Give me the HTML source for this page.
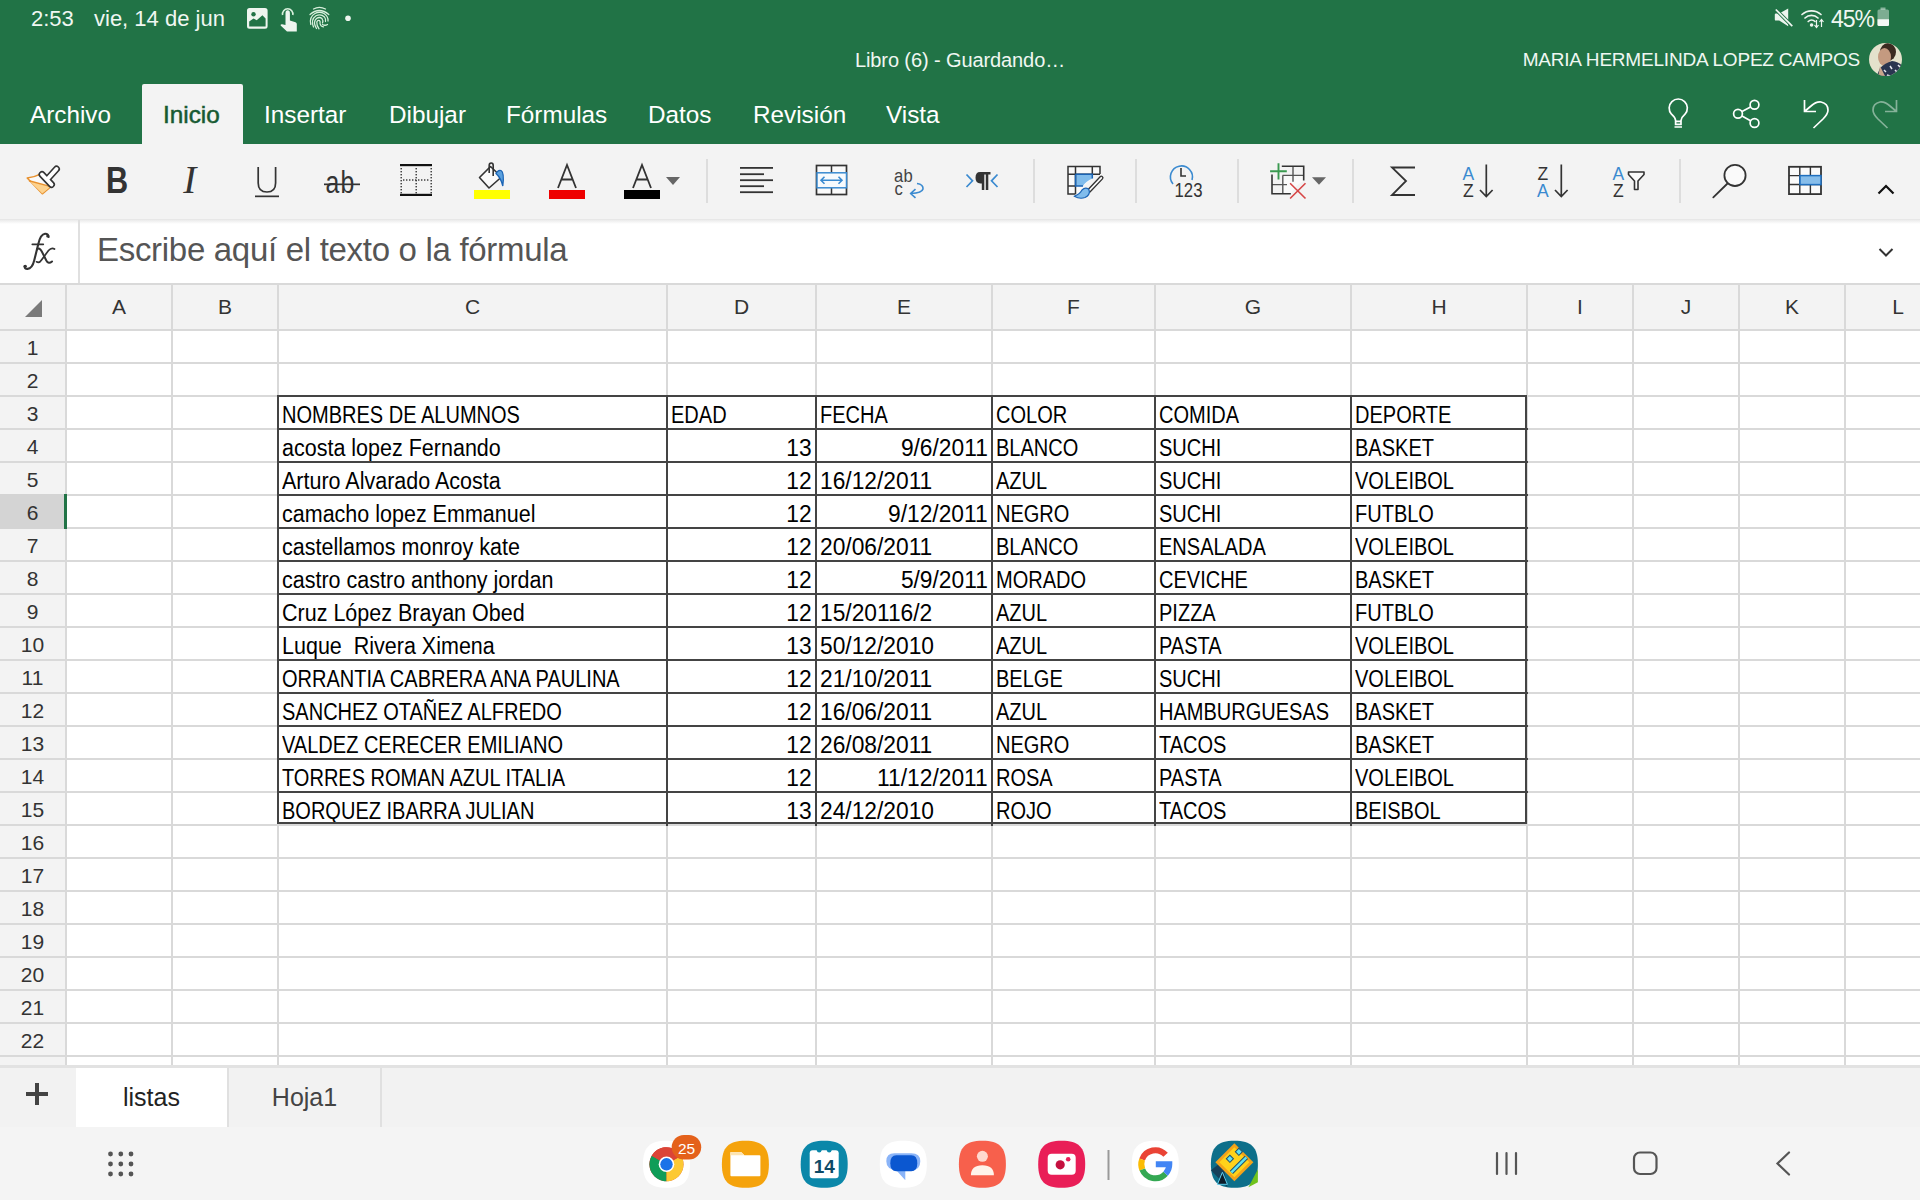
<!DOCTYPE html>
<html><head><meta charset="utf-8">
<style>
*{margin:0;padding:0;box-sizing:border-box}
html,body{width:1920px;height:1200px;overflow:hidden;background:#fff;font-family:"Liberation Sans",sans-serif;position:relative}
.abs{position:absolute}
#green{position:absolute;left:0;top:0;width:1920px;height:144px;background:#217346}
.st{position:absolute;color:#f0f7f2;font-size:24px;line-height:1;white-space:pre}
.tab{position:absolute;top:99px;color:#fff;font-size:24.3px;line-height:32px;white-space:pre}
#inicio{position:absolute;left:142px;top:84px;width:101px;height:60px;background:#f3f3f3;border-radius:2px 2px 0 0}
#toolbar{position:absolute;left:0;top:144px;width:1920px;height:76px;background:#f3f3f3}
#fbar{position:absolute;left:0;top:220px;width:1920px;height:64px;background:#fff}
#fshadow{position:absolute;left:0;top:219px;width:1920px;height:5px;background:linear-gradient(#e6e6e6,rgba(255,255,255,0))}
.sep{position:absolute;top:160px;width:2px;height:40px;background:#dcdcdc}
#hdr{position:absolute;left:0;top:284px;width:1920px;height:46px;background:#f3f3f3}
#rhcol{position:absolute;left:0;top:330px;width:66px;height:736px;background:#f3f3f3}
.ch{position:absolute;top:284px;height:46px;line-height:46px;text-align:center;font-size:21px;color:#333}
.vl{position:absolute;top:284px;width:2px;height:782px;background:#d9d9d9}
.hl{position:absolute;left:0;width:1920px;height:2px;background:#d9d9d9}
.rh{position:absolute;left:0;width:65px;height:33px;line-height:35px;text-align:center;font-size:21px;color:#333}
.rh.sel{background:#d4d4d4}
.cell{position:absolute;height:33px;line-height:39px;padding-left:4px;font-size:23px;color:#000;white-space:pre;overflow:visible}
.cell.r{text-align:right;padding-right:4px;padding-left:0}
.cell span{display:inline-block}
.tb{position:absolute;border:2px solid #444}
.th{position:absolute;height:2px;background:#444}
.tv{position:absolute;width:2px;background:#444}
#sheetbar{position:absolute;left:0;top:1065px;width:1920px;height:62px;background:#f2f2f2;border-top:3px solid #e2e2e2}
#navbar{position:absolute;left:0;top:1127px;width:1920px;height:73px;background:#f4f4f4}
svg{position:absolute;overflow:visible}
</style></head><body>
<div id="green"></div>
<!-- status bar -->
<div class="st" style="left:31px;top:8px;font-size:22px">2:53</div>
<div class="st" style="left:94px;top:8px;font-size:22px">vie, 14 de jun</div>
<div class="st" style="left:1831px;top:7.5px;font-size:23px;letter-spacing:-1.1px">45%</div>
<!-- title -->
<div class="st" style="left:0;width:1920px;text-align:center;top:50px;font-size:20px;letter-spacing:-0.1px">Libro (6) - Guardando…</div>
<div class="st" style="left:1400px;width:460px;text-align:right;top:50px;font-size:19px;letter-spacing:-0.2px">MARIA HERMELINDA LOPEZ CAMPOS</div>
<!-- ribbon tabs -->
<div id="inicio"></div>
<div class="tab" style="left:30px">Archivo</div>
<div class="tab" style="left:163px;color:#175a32;-webkit-text-stroke:0.5px #175a32">Inicio</div>
<div class="tab" style="left:264px">Insertar</div>
<div class="tab" style="left:389px">Dibujar</div>
<div class="tab" style="left:506px">Fórmulas</div>
<div class="tab" style="left:648px">Datos</div>
<div class="tab" style="left:753px">Revisión</div>
<div class="tab" style="left:886px">Vista</div>
<!-- toolbar -->
<div id="toolbar"></div>
<div id="fbar"></div>
<div id="fshadow"></div>
<div class="abs" style="left:78px;top:220px;width:2px;height:64px;background:#e0e0e0"></div>
<svg style="left:0;top:0" width="80" height="290"><g fill="none" stroke="#333" stroke-linecap="round">
<path d="M48.6,237 Q48.2,233.6 45,233.8 Q40.5,234.3 38.3,244 L34.2,260.5 Q32.2,268.6 27.5,268.9 Q24.2,269 24.6,266" stroke-width="2.1"/>
<path d="M32.3,244.3 H43.3" stroke-width="1.7"/>
<path d="M37,249.5 Q39.5,247 41.8,251.5 L46.3,260.5 Q48.5,264.5 52,261.5" stroke-width="2"/>
<path d="M54.5,249 Q51.5,247 48.5,250.5 L41.5,260 Q39.3,263.5 36.5,261.8" stroke-width="1.7"/>
</g><circle cx="47.8" cy="236" r="1.6" fill="#333"/><circle cx="25.3" cy="266.3" r="1.6" fill="#333"/></svg>
<div class="abs" style="left:97px;top:230px;font-size:33px;letter-spacing:-0.3px;line-height:40px;color:#555;white-space:pre">Escribe aquí el texto o la fórmula</div>
<!-- grid -->
<div id="hdr"></div>
<div id="rhcol"></div>
<div class="abs" style="left:0;top:283px;width:1920px;height:2px;background:#d9d9d9"></div>
<div class="ch" style="left:66px;width:106px">A</div>
<div class="ch" style="left:172px;width:106px">B</div>
<div class="ch" style="left:278px;width:389px">C</div>
<div class="ch" style="left:667px;width:149px">D</div>
<div class="ch" style="left:816px;width:176px">E</div>
<div class="ch" style="left:992px;width:163px">F</div>
<div class="ch" style="left:1155px;width:196px">G</div>
<div class="ch" style="left:1351px;width:176px">H</div>
<div class="ch" style="left:1527px;width:106px">I</div>
<div class="ch" style="left:1633px;width:106px">J</div>
<div class="ch" style="left:1739px;width:106px">K</div>
<div class="ch" style="left:1845px;width:106px">L</div>
<div class="vl" style="left:171px"></div>
<div class="vl" style="left:277px"></div>
<div class="vl" style="left:666px"></div>
<div class="vl" style="left:815px"></div>
<div class="vl" style="left:991px"></div>
<div class="vl" style="left:1154px"></div>
<div class="vl" style="left:1350px"></div>
<div class="vl" style="left:1526px"></div>
<div class="vl" style="left:1632px"></div>
<div class="vl" style="left:1738px"></div>
<div class="vl" style="left:1844px"></div>
<div class="vl" style="left:1950px"></div>
<div class="rh" style="top:330px">1</div>
<div class="rh" style="top:363px">2</div>
<div class="rh" style="top:396px">3</div>
<div class="rh" style="top:429px">4</div>
<div class="rh" style="top:462px">5</div>
<div class="rh" style="top:528px">7</div>
<div class="rh" style="top:561px">8</div>
<div class="rh" style="top:594px">9</div>
<div class="rh" style="top:627px">10</div>
<div class="rh" style="top:660px">11</div>
<div class="rh" style="top:693px">12</div>
<div class="rh" style="top:726px">13</div>
<div class="rh" style="top:759px">14</div>
<div class="rh" style="top:792px">15</div>
<div class="rh" style="top:825px">16</div>
<div class="rh" style="top:858px">17</div>
<div class="rh" style="top:891px">18</div>
<div class="rh" style="top:924px">19</div>
<div class="rh" style="top:957px">20</div>
<div class="rh" style="top:990px">21</div>
<div class="rh" style="top:1023px">22</div>
<div class="rh" style="top:1056px">23</div>
<div class="hl" style="top:329px"></div>
<div class="hl" style="top:362px"></div>
<div class="hl" style="top:395px"></div>
<div class="hl" style="top:428px"></div>
<div class="hl" style="top:461px"></div>
<div class="hl" style="top:494px"></div>
<div class="hl" style="top:527px"></div>
<div class="hl" style="top:560px"></div>
<div class="hl" style="top:593px"></div>
<div class="hl" style="top:626px"></div>
<div class="hl" style="top:659px"></div>
<div class="hl" style="top:692px"></div>
<div class="hl" style="top:725px"></div>
<div class="hl" style="top:758px"></div>
<div class="hl" style="top:791px"></div>
<div class="hl" style="top:824px"></div>
<div class="hl" style="top:857px"></div>
<div class="hl" style="top:890px"></div>
<div class="hl" style="top:923px"></div>
<div class="hl" style="top:956px"></div>
<div class="hl" style="top:989px"></div>
<div class="hl" style="top:1022px"></div>
<div class="hl" style="top:1055px"></div>
<div class="cell" style="top:396px;left:278px;width:389px"><span style="transform:scaleX(0.87);transform-origin:0 50%">NOMBRES DE ALUMNOS</span></div>
<div class="cell" style="top:396px;left:667px;width:149px"><span style="transform:scaleX(0.87);transform-origin:0 50%">EDAD</span></div>
<div class="cell" style="top:396px;left:816px;width:176px"><span style="transform:scaleX(0.87);transform-origin:0 50%">FECHA</span></div>
<div class="cell" style="top:396px;left:992px;width:163px"><span style="transform:scaleX(0.87);transform-origin:0 50%">COLOR</span></div>
<div class="cell" style="top:396px;left:1155px;width:196px"><span style="transform:scaleX(0.87);transform-origin:0 50%">COMIDA</span></div>
<div class="cell" style="top:396px;left:1351px;width:176px"><span style="transform:scaleX(0.87);transform-origin:0 50%">DEPORTE</span></div>
<div class="cell" style="top:429px;left:278px;width:389px"><span style="transform:scaleX(0.935);transform-origin:0 50%">acosta lopez Fernando</span></div>
<div class="cell r" style="top:429px;left:667px;width:149px"><span style="transform:scaleX(0.99);transform-origin:100% 50%">13</span></div>
<div class="cell r" style="top:429px;left:816px;width:176px"><span style="transform:scaleX(0.99);transform-origin:100% 50%">9/6/2011</span></div>
<div class="cell" style="top:429px;left:992px;width:163px"><span style="transform:scaleX(0.87);transform-origin:0 50%">BLANCO</span></div>
<div class="cell" style="top:429px;left:1155px;width:196px"><span style="transform:scaleX(0.87);transform-origin:0 50%">SUCHI</span></div>
<div class="cell" style="top:429px;left:1351px;width:176px"><span style="transform:scaleX(0.87);transform-origin:0 50%">BASKET</span></div>
<div class="cell" style="top:462px;left:278px;width:389px"><span style="transform:scaleX(0.935);transform-origin:0 50%">Arturo Alvarado Acosta</span></div>
<div class="cell r" style="top:462px;left:667px;width:149px"><span style="transform:scaleX(0.99);transform-origin:100% 50%">12</span></div>
<div class="cell" style="top:462px;left:816px;width:176px"><span style="transform:scaleX(0.99);transform-origin:0 50%">16/12/2011</span></div>
<div class="cell" style="top:462px;left:992px;width:163px"><span style="transform:scaleX(0.87);transform-origin:0 50%">AZUL</span></div>
<div class="cell" style="top:462px;left:1155px;width:196px"><span style="transform:scaleX(0.87);transform-origin:0 50%">SUCHI</span></div>
<div class="cell" style="top:462px;left:1351px;width:176px"><span style="transform:scaleX(0.87);transform-origin:0 50%">VOLEIBOL</span></div>
<div class="cell" style="top:495px;left:278px;width:389px"><span style="transform:scaleX(0.935);transform-origin:0 50%">camacho lopez Emmanuel</span></div>
<div class="cell r" style="top:495px;left:667px;width:149px"><span style="transform:scaleX(0.99);transform-origin:100% 50%">12</span></div>
<div class="cell r" style="top:495px;left:816px;width:176px"><span style="transform:scaleX(0.99);transform-origin:100% 50%">9/12/2011</span></div>
<div class="cell" style="top:495px;left:992px;width:163px"><span style="transform:scaleX(0.87);transform-origin:0 50%">NEGRO</span></div>
<div class="cell" style="top:495px;left:1155px;width:196px"><span style="transform:scaleX(0.87);transform-origin:0 50%">SUCHI</span></div>
<div class="cell" style="top:495px;left:1351px;width:176px"><span style="transform:scaleX(0.87);transform-origin:0 50%">FUTBLO</span></div>
<div class="cell" style="top:528px;left:278px;width:389px"><span style="transform:scaleX(0.935);transform-origin:0 50%">castellamos monroy kate</span></div>
<div class="cell r" style="top:528px;left:667px;width:149px"><span style="transform:scaleX(0.99);transform-origin:100% 50%">12</span></div>
<div class="cell" style="top:528px;left:816px;width:176px"><span style="transform:scaleX(0.99);transform-origin:0 50%">20/06/2011</span></div>
<div class="cell" style="top:528px;left:992px;width:163px"><span style="transform:scaleX(0.87);transform-origin:0 50%">BLANCO</span></div>
<div class="cell" style="top:528px;left:1155px;width:196px"><span style="transform:scaleX(0.87);transform-origin:0 50%">ENSALADA</span></div>
<div class="cell" style="top:528px;left:1351px;width:176px"><span style="transform:scaleX(0.87);transform-origin:0 50%">VOLEIBOL</span></div>
<div class="cell" style="top:561px;left:278px;width:389px"><span style="transform:scaleX(0.935);transform-origin:0 50%">castro castro anthony jordan</span></div>
<div class="cell r" style="top:561px;left:667px;width:149px"><span style="transform:scaleX(0.99);transform-origin:100% 50%">12</span></div>
<div class="cell r" style="top:561px;left:816px;width:176px"><span style="transform:scaleX(0.99);transform-origin:100% 50%">5/9/2011</span></div>
<div class="cell" style="top:561px;left:992px;width:163px"><span style="transform:scaleX(0.87);transform-origin:0 50%">MORADO</span></div>
<div class="cell" style="top:561px;left:1155px;width:196px"><span style="transform:scaleX(0.87);transform-origin:0 50%">CEVICHE</span></div>
<div class="cell" style="top:561px;left:1351px;width:176px"><span style="transform:scaleX(0.87);transform-origin:0 50%">BASKET</span></div>
<div class="cell" style="top:594px;left:278px;width:389px"><span style="transform:scaleX(0.935);transform-origin:0 50%">Cruz López Brayan Obed</span></div>
<div class="cell r" style="top:594px;left:667px;width:149px"><span style="transform:scaleX(0.99);transform-origin:100% 50%">12</span></div>
<div class="cell" style="top:594px;left:816px;width:176px"><span style="transform:scaleX(0.99);transform-origin:0 50%">15/20116/2</span></div>
<div class="cell" style="top:594px;left:992px;width:163px"><span style="transform:scaleX(0.87);transform-origin:0 50%">AZUL</span></div>
<div class="cell" style="top:594px;left:1155px;width:196px"><span style="transform:scaleX(0.87);transform-origin:0 50%">PIZZA</span></div>
<div class="cell" style="top:594px;left:1351px;width:176px"><span style="transform:scaleX(0.87);transform-origin:0 50%">FUTBLO</span></div>
<div class="cell" style="top:627px;left:278px;width:389px"><span style="transform:scaleX(0.935);transform-origin:0 50%">Luque&nbsp; Rivera Ximena</span></div>
<div class="cell r" style="top:627px;left:667px;width:149px"><span style="transform:scaleX(0.99);transform-origin:100% 50%">13</span></div>
<div class="cell" style="top:627px;left:816px;width:176px"><span style="transform:scaleX(0.99);transform-origin:0 50%">50/12/2010</span></div>
<div class="cell" style="top:627px;left:992px;width:163px"><span style="transform:scaleX(0.87);transform-origin:0 50%">AZUL</span></div>
<div class="cell" style="top:627px;left:1155px;width:196px"><span style="transform:scaleX(0.87);transform-origin:0 50%">PASTA</span></div>
<div class="cell" style="top:627px;left:1351px;width:176px"><span style="transform:scaleX(0.87);transform-origin:0 50%">VOLEIBOL</span></div>
<div class="cell" style="top:660px;left:278px;width:389px"><span style="transform:scaleX(0.87);transform-origin:0 50%">ORRANTIA CABRERA ANA PAULINA</span></div>
<div class="cell r" style="top:660px;left:667px;width:149px"><span style="transform:scaleX(0.99);transform-origin:100% 50%">12</span></div>
<div class="cell" style="top:660px;left:816px;width:176px"><span style="transform:scaleX(0.99);transform-origin:0 50%">21/10/2011</span></div>
<div class="cell" style="top:660px;left:992px;width:163px"><span style="transform:scaleX(0.87);transform-origin:0 50%">BELGE</span></div>
<div class="cell" style="top:660px;left:1155px;width:196px"><span style="transform:scaleX(0.87);transform-origin:0 50%">SUCHI</span></div>
<div class="cell" style="top:660px;left:1351px;width:176px"><span style="transform:scaleX(0.87);transform-origin:0 50%">VOLEIBOL</span></div>
<div class="cell" style="top:693px;left:278px;width:389px"><span style="transform:scaleX(0.87);transform-origin:0 50%">SANCHEZ OTAÑEZ ALFREDO</span></div>
<div class="cell r" style="top:693px;left:667px;width:149px"><span style="transform:scaleX(0.99);transform-origin:100% 50%">12</span></div>
<div class="cell" style="top:693px;left:816px;width:176px"><span style="transform:scaleX(0.99);transform-origin:0 50%">16/06/2011</span></div>
<div class="cell" style="top:693px;left:992px;width:163px"><span style="transform:scaleX(0.87);transform-origin:0 50%">AZUL</span></div>
<div class="cell" style="top:693px;left:1155px;width:196px"><span style="transform:scaleX(0.87);transform-origin:0 50%">HAMBURGUESAS</span></div>
<div class="cell" style="top:693px;left:1351px;width:176px"><span style="transform:scaleX(0.87);transform-origin:0 50%">BASKET</span></div>
<div class="cell" style="top:726px;left:278px;width:389px"><span style="transform:scaleX(0.87);transform-origin:0 50%">VALDEZ CERECER EMILIANO</span></div>
<div class="cell r" style="top:726px;left:667px;width:149px"><span style="transform:scaleX(0.99);transform-origin:100% 50%">12</span></div>
<div class="cell" style="top:726px;left:816px;width:176px"><span style="transform:scaleX(0.99);transform-origin:0 50%">26/08/2011</span></div>
<div class="cell" style="top:726px;left:992px;width:163px"><span style="transform:scaleX(0.87);transform-origin:0 50%">NEGRO</span></div>
<div class="cell" style="top:726px;left:1155px;width:196px"><span style="transform:scaleX(0.87);transform-origin:0 50%">TACOS</span></div>
<div class="cell" style="top:726px;left:1351px;width:176px"><span style="transform:scaleX(0.87);transform-origin:0 50%">BASKET</span></div>
<div class="cell" style="top:759px;left:278px;width:389px"><span style="transform:scaleX(0.87);transform-origin:0 50%">TORRES ROMAN AZUL ITALIA</span></div>
<div class="cell r" style="top:759px;left:667px;width:149px"><span style="transform:scaleX(0.99);transform-origin:100% 50%">12</span></div>
<div class="cell r" style="top:759px;left:816px;width:176px"><span style="transform:scaleX(0.99);transform-origin:100% 50%">11/12/2011</span></div>
<div class="cell" style="top:759px;left:992px;width:163px"><span style="transform:scaleX(0.87);transform-origin:0 50%">ROSA</span></div>
<div class="cell" style="top:759px;left:1155px;width:196px"><span style="transform:scaleX(0.87);transform-origin:0 50%">PASTA</span></div>
<div class="cell" style="top:759px;left:1351px;width:176px"><span style="transform:scaleX(0.87);transform-origin:0 50%">VOLEIBOL</span></div>
<div class="cell" style="top:792px;left:278px;width:389px"><span style="transform:scaleX(0.87);transform-origin:0 50%">BORQUEZ IBARRA JULIAN</span></div>
<div class="cell r" style="top:792px;left:667px;width:149px"><span style="transform:scaleX(0.99);transform-origin:100% 50%">13</span></div>
<div class="cell" style="top:792px;left:816px;width:176px"><span style="transform:scaleX(0.99);transform-origin:0 50%">24/12/2010</span></div>
<div class="cell" style="top:792px;left:992px;width:163px"><span style="transform:scaleX(0.87);transform-origin:0 50%">ROJO</span></div>
<div class="cell" style="top:792px;left:1155px;width:196px"><span style="transform:scaleX(0.87);transform-origin:0 50%">TACOS</span></div>
<div class="cell" style="top:792px;left:1351px;width:176px"><span style="transform:scaleX(0.87);transform-origin:0 50%">BEISBOL</span></div>
<div class="tb" style="left:277px;top:395px;width:1250px;height:429px"></div>
<div class="th" style="left:277px;top:428px;width:1251px"></div>
<div class="th" style="left:277px;top:461px;width:1251px"></div>
<div class="th" style="left:277px;top:494px;width:1251px"></div>
<div class="th" style="left:277px;top:527px;width:1251px"></div>
<div class="th" style="left:277px;top:560px;width:1251px"></div>
<div class="th" style="left:277px;top:593px;width:1251px"></div>
<div class="th" style="left:277px;top:626px;width:1251px"></div>
<div class="th" style="left:277px;top:659px;width:1251px"></div>
<div class="th" style="left:277px;top:692px;width:1251px"></div>
<div class="th" style="left:277px;top:725px;width:1251px"></div>
<div class="th" style="left:277px;top:758px;width:1251px"></div>
<div class="th" style="left:277px;top:791px;width:1251px"></div>
<div class="tv" style="left:666px;top:395px;height:431px"></div>
<div class="tv" style="left:815px;top:395px;height:431px"></div>
<div class="tv" style="left:991px;top:395px;height:431px"></div>
<div class="tv" style="left:1154px;top:395px;height:431px"></div>
<div class="tv" style="left:1350px;top:395px;height:431px"></div>
<div class="rh sel" style="top:494px;height:35px;line-height:37px">6</div>
<div class="vl" style="left:65px"></div>
<svg style="left:0;top:0" width="60" height="340"><polygon points="25,317 42,317 42,300" fill="#7a7a7a"/></svg>
<div class="abs" style="left:64px;top:494px;width:3px;height:35px;background:#217346"></div>
<!-- sheet tabs -->
<div id="sheetbar"></div>
<div class="abs" style="left:76px;top:1068px;width:151px;height:59px;background:#fff"></div>
<div class="abs" style="left:227px;top:1068px;width:2px;height:59px;background:#e0e0e0"></div>
<div class="abs" style="left:380px;top:1068px;width:2px;height:59px;background:#e0e0e0"></div>
<div class="abs" style="left:76px;top:1080px;width:151px;text-align:center;font-size:25px;line-height:34px;color:#222">listas</div>
<div class="abs" style="left:229px;top:1080px;width:151px;text-align:center;font-size:25px;line-height:34px;color:#444">Hoja1</div>
<div class="abs" style="left:26px;top:1092px;width:22px;height:4px;background:#444"></div>
<div class="abs" style="left:35px;top:1083px;width:4px;height:22px;background:#444"></div>
<div id="navbar"></div>
<svg style="left:0;top:0" width="1920" height="1200" viewBox="0 0 1920 1200">
<!-- ===== toolbar separators ===== -->
<g fill="#dddddd">
<rect x="706" y="159" width="2" height="44"/>
<rect x="1033" y="159" width="2" height="44"/>
<rect x="1135" y="159" width="2" height="44"/>
<rect x="1237" y="159" width="2" height="44"/>
<rect x="1352" y="159" width="2" height="44"/>
<rect x="1679" y="159" width="2" height="44"/>
</g>
<!-- format painter -->
<path d="M27.2,178.1 Q34,177.5 40.2,174.2 L51.5,186.2 L42.3,193.8 Z" fill="#fafafa" stroke="#e8912e" stroke-width="1.5" stroke-linejoin="round"/>
<path d="M29.5,181.2 L50.8,186.5 L42.3,193.4 Z" fill="#fdd28e"/>
<path d="M29,180.8 L51,186.6" stroke="#e8912e" stroke-width="1.4"/>
<g stroke-linecap="round" fill="none">
<path d="M42,174.5 L51.5,184.5 M47,179.5 L56.5,169" stroke="#333" stroke-width="7"/>
<path d="M42,174.5 L51.5,184.5 M47,179.5 L56.5,169" stroke="#fff" stroke-width="3.8"/>
</g>
<!-- B I U ab -->
<text x="0" y="0" transform="translate(106,193.3) scale(0.82,1)" font-family="Liberation Sans" font-weight="bold" font-size="37.5" fill="#333">B</text>
<text x="183.3" y="193.3" font-family="Liberation Serif" font-style="italic" font-size="39" fill="#333">I</text>
<path d="M258.2,167 V183 Q258.2,192 267,192 Q275.6,192 275.6,183 V167" fill="none" stroke="#333" stroke-width="1.7"/>
<rect x="255" y="195.5" width="24" height="1.7" fill="#333"/>
<text transform="translate(325.5,193) scale(0.8,1)" font-family="Liberation Sans" font-size="31" fill="#333">a</text><text transform="translate(340.5,193) scale(0.8,1)" font-family="Liberation Sans" font-size="31" fill="#333">b</text>
<rect x="324" y="183.5" width="36" height="1.7" fill="#333"/>
<!-- borders -->
<rect x="400" y="164" width="32" height="2.2" fill="#111"/>
<rect x="400" y="193.8" width="32" height="2.2" fill="#111"/>
<g fill="#333"><rect x="400.5" y="168" width="1.4" height="1.4"/><rect x="415.5" y="168" width="1.4" height="1.4"/><rect x="430.5" y="168" width="1.4" height="1.4"/><rect x="400.5" y="171" width="1.4" height="1.4"/><rect x="415.5" y="171" width="1.4" height="1.4"/><rect x="430.5" y="171" width="1.4" height="1.4"/><rect x="400.5" y="174" width="1.4" height="1.4"/><rect x="415.5" y="174" width="1.4" height="1.4"/><rect x="430.5" y="174" width="1.4" height="1.4"/><rect x="400.5" y="177" width="1.4" height="1.4"/><rect x="415.5" y="177" width="1.4" height="1.4"/><rect x="430.5" y="177" width="1.4" height="1.4"/><rect x="400.5" y="180" width="1.4" height="1.4"/><rect x="415.5" y="180" width="1.4" height="1.4"/><rect x="430.5" y="180" width="1.4" height="1.4"/><rect x="400.5" y="183" width="1.4" height="1.4"/><rect x="415.5" y="183" width="1.4" height="1.4"/><rect x="430.5" y="183" width="1.4" height="1.4"/><rect x="400.5" y="186" width="1.4" height="1.4"/><rect x="415.5" y="186" width="1.4" height="1.4"/><rect x="430.5" y="186" width="1.4" height="1.4"/><rect x="400.5" y="189" width="1.4" height="1.4"/><rect x="415.5" y="189" width="1.4" height="1.4"/><rect x="430.5" y="189" width="1.4" height="1.4"/><rect x="400.5" y="192" width="1.4" height="1.4"/><rect x="415.5" y="192" width="1.4" height="1.4"/><rect x="430.5" y="192" width="1.4" height="1.4"/><rect x="403" y="179.3" width="1.4" height="1.4"/><rect x="406" y="179.3" width="1.4" height="1.4"/><rect x="409" y="179.3" width="1.4" height="1.4"/><rect x="412" y="179.3" width="1.4" height="1.4"/><rect x="415" y="179.3" width="1.4" height="1.4"/><rect x="418" y="179.3" width="1.4" height="1.4"/><rect x="421" y="179.3" width="1.4" height="1.4"/><rect x="424" y="179.3" width="1.4" height="1.4"/><rect x="427" y="179.3" width="1.4" height="1.4"/></g>
<!-- fill color -->
<rect x="474" y="190" width="36" height="9" fill="#ffff00"/>
<path d="M479.5,177.5 L490.5,166.5 L501.5,177 L489,188 Z" fill="#fafafa" stroke="#333" stroke-width="1.6" stroke-linejoin="round"/>
<path d="M489.2,173 V165.5 Q489.2,163 491.2,163 Q493.2,163 493.2,165.5 V176" fill="none" stroke="#333" stroke-width="1.6"/>
<path d="M496,173.5 Q498,169.5 501,170.5 Q504.5,172.5 502.8,186 Q501,178 496,173.5 Z" fill="#5aa0de" stroke="#1b64b5" stroke-width="1.3"/>
<!-- font color A red -->
<path d="M558,188 L567,165 L576,188 M561.5,179.5 H572.5" fill="none" stroke="#333" stroke-width="1.8"/>
<rect x="549" y="190" width="36" height="9" fill="#ee0000"/>
<path d="M633,188 L642,165 L651,188 M636.5,179.5 H647.5" fill="none" stroke="#333" stroke-width="1.8"/>
<rect x="624" y="190" width="36" height="9" fill="#000"/>
<path d="M666,177 L680,177 L673,185 Z" fill="#666"/>
<!-- align -->
<g fill="#333">
<rect x="740" y="167" width="33" height="1.8"/>
<rect x="740" y="173.3" width="24" height="1.8"/>
<rect x="740" y="179.3" width="33" height="1.8"/>
<rect x="740" y="185.3" width="24" height="1.8"/>
<rect x="740" y="191.3" width="33" height="1.8"/>
</g>
<!-- merge -->
<rect x="816.5" y="165.5" width="30" height="29" fill="#fafafa" stroke="#333" stroke-width="1.7"/>
<path d="M831.5,166 V173 M831.5,188 V194" stroke="#333" stroke-width="1.5"/>
<rect x="817" y="172.8" width="29.5" height="15" fill="#f6fafd" stroke="#3a8ad0" stroke-width="1.5"/>
<path d="M821,180.3 H842 M824.5,176.8 L821,180.3 L824.5,183.8 M838.5,176.8 L842,180.3 L838.5,183.8" fill="none" stroke="#3a8ad0" stroke-width="1.6"/>
<!-- wrap text -->
<text transform="translate(894,181.7) scale(0.9,1)" font-family="Liberation Sans" font-size="18.5" fill="#444" letter-spacing="0.3">ab</text>
<text transform="translate(894.5,195.3) scale(0.9,1)" font-family="Liberation Sans" font-size="18.5" fill="#444">c</text>
<path d="M917,183.5 Q923.5,184.5 923,189 Q922,193 911,193.5 M915.5,189.2 L910.5,193.5 L915.5,197.8" fill="none" stroke="#3a8ad0" stroke-width="1.6" stroke-linejoin="round"/>
<!-- RTL -->
<path d="M966.5,174.5 L972.5,180.8 L966.5,187" fill="none" stroke="#3a8ad0" stroke-width="1.7"/>
<path d="M997.5,174.5 L991.5,180.8 L997.5,187" fill="none" stroke="#3a8ad0" stroke-width="1.7"/>
<path d="M980,172 H990.5 V174.5 H988.3 V190 H985.8 V174.5 H984.3 V190 H981.8 V183.5 H980.5 Q975.5,183.5 975.5,177.8 Q975.5,172 980,172 Z" fill="#333"/>
<!-- conditional formatting -->
<path d="M1068,166.5 H1100 V174.2 H1092.3 V178.5 L1083,186 V194 H1068 Z" fill="#fafafa"/>
<path d="M1075.5,174.2 H1092.3 V178.5 Q1086,181 1083,186 H1075.5 Z" fill="#80bcec"/>
<path d="M1068,174.2 H1100 M1068,186 H1075.5 M1100,174 V166.5 H1068 V194 H1075.5 M1075.5,166.5 V194 M1092.3,166.5 V174.2" stroke="#333" stroke-width="1.5" fill="none"/>
<path d="M1075.5,174.2 H1092.3 V178.5 M1075.5,174.2 V186 H1083" stroke="#1b64b5" stroke-width="1.5" fill="none"/>
<path d="M1101.3,177.8 L1089.3,190.5" stroke="#333" stroke-width="4.5" stroke-linecap="round"/>
<path d="M1101.3,177.8 L1089.3,190.5" stroke="#fafafa" stroke-width="1.8" stroke-linecap="round"/>
<path d="M1088.5,189 Q1085,187 1082,190 Q1080,194 1074.2,196.3 Q1080,199.5 1085,197.5 Q1090,195 1089.3,191 Z" fill="#80bcec" stroke="#1b64b5" stroke-width="1.2" stroke-linejoin="round"/>
<!-- number format -->
<path d="M1173,184 A11,11 0 1 1 1192,180" fill="none" stroke="#3a8ad0" stroke-width="1.6"/>
<path d="M1181,168 V176 H1186" fill="none" stroke="#333" stroke-width="1.6"/>
<text transform="translate(1174.5,196.7) scale(0.86,1)" font-family="Liberation Sans" font-size="19.5" fill="#333">123</text>
<!-- insert/delete -->
<path d="M1282.5,175.4 H1303.7 V180.5 L1296,186 L1290.8,193.7 H1282.8 Z" fill="#fafafa"/>
<path d="M1272,184.6 H1287 M1282.8,175.4 V193.7 M1293,166.3 V181.7 M1282.5,175.4 H1303.7" stroke="#555" stroke-width="1.4" fill="none"/>
<path d="M1281.8,166.3 H1303.7 V180.4 M1272,174.6 V193.7 H1290.8" stroke="#333" stroke-width="1.6" fill="none"/>
<path d="M1278.5,163.3 V179.6 M1270.1,171.25 H1286.8" stroke="#3a9a50" stroke-width="1.9"/>
<path d="M1290.1,183.3 L1305.5,198.5 M1305.5,183.3 L1290.1,198.5" stroke="#d64545" stroke-width="1.6"/>
<path d="M1312,177.3 L1326,177.3 L1319,184.8 Z" fill="#666"/>
<!-- sigma -->
<path d="M1415,167.5 H1392 L1406,181 L1392,195 H1415" fill="none" stroke="#333" stroke-width="1.8"/>
<!-- sort AZ -->
<g font-family="Liberation Sans" font-size="17.5">
<text x="1462.5" y="179.5" fill="#3a8ad0">A</text>
<text x="1463" y="196.5" fill="#333">Z</text>
<text x="1537.5" y="179.5" fill="#333">Z</text>
<text x="1537" y="196.5" fill="#3a8ad0">A</text>
<text x="1612.5" y="179.5" fill="#3a8ad0">A</text>
<text x="1613" y="196.5" fill="#333">Z</text>
</g>
<path d="M1486.3,164.5 V196 M1480,190 L1486.3,196.5 L1492.6,190" fill="none" stroke="#333" stroke-width="1.7"/>
<path d="M1561.3,164.5 V196 M1555,190 L1561.3,196.5 L1567.6,190" fill="none" stroke="#333" stroke-width="1.7"/>
<path d="M1628.5,172 H1644 V174.5 L1638,181 V189.5 H1634.5 V181 L1628.5,174.5 Z" fill="#fafafa" stroke="#333" stroke-width="1.6" stroke-linejoin="round"/>
<!-- search -->
<circle cx="1735" cy="175.4" r="10.6" fill="#fafafa" stroke="#333" stroke-width="1.8"/>
<path d="M1727.5,183.5 L1713.3,197.3" stroke="#333" stroke-width="1.8" stroke-linecap="round"/>
<!-- table -->
<rect x="1789" y="166.8" width="32" height="27.3" fill="#fafafa" stroke="#333" stroke-width="1.8"/>
<path d="M1789,175.6 H1821 M1789,184.5 H1821 M1799.8,166.8 V194 M1810.4,166.8 V194" stroke="#333" stroke-width="1.4"/>
<rect x="1800" y="175.6" width="21" height="9" fill="#86bdea" stroke="#1f6fbf" stroke-width="1.5"/>
<!-- collapse chevron -->
<path d="M1878.5,193.5 L1886,186 L1893.5,193.5" fill="none" stroke="#111" stroke-width="2.2"/>
<!-- formula bar expand chevron -->
<path d="M1879.5,249 L1886,255.5 L1892.5,249" fill="none" stroke="#333" stroke-width="2"/>

<!-- ===== green bar icons ===== -->
<g fill="none" stroke="#fff" stroke-width="1.7">
<path d="M1675.6,124.3 V120.5 Q1675.3,117.5 1671.5,114.2 A9.1,9.1 0 1 1 1685,114.2 Q1681.3,117.5 1681,120.5 V124.3 Z"/>
<path d="M1675.6,121.3 H1681 M1674.5,127 H1682"/>
<circle cx="1754.5" cy="104.7" r="4.4"/>
<circle cx="1738" cy="113.8" r="4.4"/>
<circle cx="1754.5" cy="123" r="4.4"/>
<path d="M1742,111.6 L1750.5,107 M1742,116 L1750.5,120.7"/>
<path d="M1804.5,100 V111.5 H1816 M1804.5,111.5 L1811,106 Q1816,101.5 1821,102 Q1828,103.5 1828,110 Q1828,114 1823,119 L1813.5,128"/>
</g>
<g fill="none" stroke="#fff" stroke-opacity="0.45" stroke-width="1.7">
<path d="M1896.5,100 V111.5 H1885 M1896.5,111.5 L1890,106 Q1885,101.5 1880,102 Q1873,103.5 1873,110 Q1873,114 1878,119 L1887.5,128"/>
</g>

<!-- ===== status bar icons ===== -->
<g fill="#eef5ef">
<!-- image icon -->
<path d="M249.5,8 H265 Q267.6,8 267.6,10.5 V26.3 Q267.6,28.8 265,28.8 H249.5 Q247,28.8 247,26.3 V10.5 Q247,8 249.5,8 Z M249.2,21.5 L253.5,18.4 L256.7,20.2 L262.4,15.2 L265.6,18.4 V26.5 H249.2 Z" fill-rule="evenodd"/>
<circle cx="253.5" cy="14.2" r="2.2" fill="#217346"/>
<!-- touch -->
<path d="M282.6,15 A5.2,5.2 0 1 1 292.8,15" fill="none" stroke="#d8f0dc" stroke-width="1.6"/>
<path d="M285.5,13 Q285.5,10.3 287.7,10.3 Q289.9,10.3 289.9,13 V20.5 L295.5,22.2 Q296.8,22.7 296.8,24 V31.5 H287 L280.6,25.5 Q280.3,24.3 282,24.2 L285.5,25 Z"/>
<!-- dot -->
<circle cx="348" cy="18.3" r="2.8"/>
</g>
<g fill="none" stroke="#d8f0dc" stroke-width="1.25" stroke-linecap="round">
<path d="M313.5,9 Q319.3,5.8 325.5,9"/>
<path d="M310,14.5 Q319.3,6.5 328.8,14.5"/>
<path d="M310.8,24.5 Q309,17 315,13.5 Q319.5,11 324,13.5 Q328.5,16.5 328,21"/>
<path d="M313.5,27 Q310.5,19.5 316,15.7 Q321,13.5 324.5,17 Q326.3,19.5 325.5,21.5"/>
<path d="M316.5,28.5 Q312.5,22 316.5,18.5 Q319.5,16.5 322,18.5 Q323.5,20.5 322.5,23"/>
<path d="M319,28.8 Q316.5,25.5 316.8,22 Q317.5,20 319.5,20.5 Q320.5,21.5 320,23.5 Q320.5,26.5 323.5,26.8"/>
<path d="M322.5,24.5 Q325,26 327.5,24.5"/>
</g>
<!-- right side: mute -->
<path d="M1774.8,14.6 Q1774.8,13.5 1776,13.5 H1779.2 L1788.2,8.6 V26.3 L1779.2,20.6 H1776 Q1774.8,20.6 1774.8,19.4 Z" fill="#eef5ef"/>
<path d="M1775.8,9.5 L1792.3,26.2" stroke="#217346" stroke-width="3.6"/>
<path d="M1775.8,9.5 L1792.3,26.2" stroke="#eef5ef" stroke-width="1.7"/>
<!-- wifi -->
<g fill="none" stroke="#eef5ef" stroke-width="1.7" stroke-linecap="round">
<path d="M1802,14.5 A14,14 0 0 1 1821,14.5 M1805,18 A9.5,9.5 0 0 1 1818,18 M1808.2,21.5 A5,5 0 0 1 1815,21.5"/>
</g>
<circle cx="1811.6" cy="25" r="1.8" fill="#eef5ef"/>
<path d="M1816.5,20 V27 M1814.5,25 L1816.5,27.5 L1818.5,25 M1821.5,27 V20 M1819.5,22 L1821.5,19.5 L1823.5,22" fill="none" stroke="#eef5ef" stroke-width="1.2"/>
<!-- battery -->
<rect x="1880.5" y="7.5" width="5" height="2.5" fill="#eef5ef" fill-opacity="0.5"/>
<rect x="1877.5" y="9.5" width="11.5" height="16.5" rx="1.5" fill="#eef5ef" fill-opacity="0.45"/>
<path d="M1877.5,19.2 H1889 V24.5 Q1889,26 1887.5,26 H1879 Q1877.5,26 1877.5,24.5 Z" fill="#f4f8f5"/>

<!-- ===== nav bar ===== -->
<g fill="#555">
<circle cx="110.5" cy="1154" r="2.4"/><circle cx="120.8" cy="1154" r="2.4"/><circle cx="131" cy="1154" r="2.4"/>
<circle cx="110.5" cy="1164" r="2.4"/><circle cx="120.8" cy="1164" r="2.4"/><circle cx="131" cy="1164" r="2.4"/>
<circle cx="110.5" cy="1174" r="2.4"/><circle cx="120.8" cy="1174" r="2.4"/><circle cx="131" cy="1174" r="2.4"/>
</g>
<g stroke="#555" stroke-width="2.2" fill="none" stroke-linecap="round">
<path d="M1497,1153 V1174 M1506.5,1153 V1174 M1516,1153 V1174"/>
<rect x="1634" y="1152.5" width="22.5" height="21.5" rx="6"/>
<path d="M1789,1152.5 L1777.5,1163.5 L1789,1174.5"/>
</g>
<rect x="1107.5" y="1150" width="2" height="30" fill="#999"/>
</svg>
<svg style="left:0;top:0" width="1920" height="1200" viewBox="0 0 1920 1200">
<defs>
<clipPath id="avc"><circle cx="1885.5" cy="59.4" r="16.5"/></clipPath>
<path id="sq" d="M0,-23.5 C17,-23.5 23.5,-17 23.5,0 C23.5,17 17,23.5 0,23.5 C-17,23.5 -23.5,17 -23.5,0 C-23.5,-17 -17,-23.5 0,-23.5 Z"/>
</defs>
<!-- avatar -->
<g clip-path="url(#avc)">
<rect x="1868" y="42" width="36" height="36" fill="#e4e2cc"/>
<ellipse cx="1888" cy="52" rx="8" ry="9" fill="#3b2a20"/>
<ellipse cx="1884.5" cy="57" rx="6.5" ry="9" fill="#c49a80"/>
<path d="M1876,78 L1880,68 Q1885,63 1892,61 Q1900,62 1904,68 V78 Z" fill="#2a3550"/>
<path d="M1884,70 l2,2 M1890,66 l2,3 M1895,70 l2,2 M1898,65 l2,2 M1887,75 l3,1 M1893,75 l2,2 M1880,73 l2,1" stroke="#e8eaf0" stroke-width="1.5"/>
<path d="M1880,66 Q1883,72 1886,78 H1878 Z" fill="#c9a58c"/>
</g>
<!-- dock -->
<!-- chrome -->
<g transform="translate(666.5,1164.3)">
<use href="#sq" fill="#fff"/>
<circle r="17" fill="#db4437"/>
<path d="M0,0 L-14.7,8.5 A17,17 0 0 1 -14.7,-8.5 L0,-17 A17,17 0 0 0 -14.7,-8.5 Z" fill="#db4437"/>
<path d="M0,0 L-14.72,-8.5 A17,17 0 0 0 0,17 Z" fill="#0f9d58"/>
<path d="M0,0 L0,17 A17,17 0 0 0 14.72,-8.5 Z" fill="#fcc934"/>
<path d="M0,0 L14.72,-8.5 A17,17 0 0 0 -14.72,-8.5 Z" fill="#db4437"/>
<circle r="7.8" fill="#fff"/>
<circle r="6.2" fill="#1a73e8"/>
</g>
<g>
<rect x="671.7" y="1135" width="29.5" height="24.5" rx="12.2" fill="#e4611b"/>
<text x="686.5" y="1153.5" font-family="Liberation Sans" font-size="15.5" fill="#fff" text-anchor="middle">25</text>
</g>
<!-- files -->
<g transform="translate(745.4,1164.3)">
<use href="#sq" fill="#f5a30c"/>
<path d="M-15,-12 H-4 L-1,-9 H14 Q15,-9 15,-8 V11 Q15,12 14,12 H-14 Q-15,12 -15,11 Z" fill="#fff"/>
<path d="M-15,-12 H-4 L-1,-9 H-15 Z" fill="#fde4b0"/>
</g>
<!-- calendar -->
<g transform="translate(824.2,1164.3)">
<use href="#sq" fill="#0b87a9"/>
<rect x="-14.5" y="-14" width="29" height="28" rx="3" fill="#fff"/>
<circle cx="-5" cy="-14" r="2.3" fill="#0b87a9"/><circle cx="5" cy="-14" r="2.3" fill="#0b87a9"/>
<text x="0" y="9" font-family="Liberation Sans" font-weight="bold" font-size="19" fill="#0e4a66" text-anchor="middle">14</text>
</g>
<!-- messages -->
<g transform="translate(903.3,1164.3)">
<use href="#sq" fill="#fff"/>
<path d="M-9,-11 H8 Q17,-11 17,-3 Q17,6 8,6 H2 V16 L-7,6 Q-17,5 -17,-3 Q-17,-11 -9,-11 Z" fill="#8ab4f8"/>
<path d="M-7,-9 H8 Q14,-9 14,-1 Q14,7 8,7 H-7 Q-13,7 -13,-1 Q-13,-9 -7,-9 Z" fill="#0b57d0"/>
</g>
<!-- contacts -->
<g transform="translate(982.4,1164.3)">
<use href="#sq" fill="#f7604c"/>
<circle cx="0" cy="-8" r="5.5" fill="#ffd9cf"/>
<path d="M-11.5,11 Q-11.5,1 0,1 Q11.5,1 11.5,11 Z" fill="#fff3ea"/>
</g>
<!-- camera -->
<g transform="translate(1061.7,1164.3)">
<use href="#sq" fill="#e91e57"/>
<rect x="-14" y="-10.5" width="28" height="21" rx="4" fill="#fff"/>
<circle cx="-1.5" cy="0.5" r="4.6" fill="#c5103f"/>
<circle cx="6.5" cy="-5" r="2.3" fill="#e91e57"/>
</g>
<!-- google -->
<g transform="translate(1155.3,1164.3)">
<use href="#sq" fill="#fff"/>
<path d="M10.3,-9.5 A14,14 0 0 0 -13.2,-4.8" fill="none" stroke="#ea4335" stroke-width="6"/>
<path d="M-13.2,-4.8 A14,14 0 0 0 -13,5.2" fill="none" stroke="#fbbc04" stroke-width="6"/>
<path d="M-13,5.2 A14,14 0 0 0 10.3,9.5" fill="none" stroke="#34a853" stroke-width="6"/>
<path d="M10.3,9.5 A14,14 0 0 0 14,0 H0.5" fill="none" stroke="#4285f4" stroke-width="6"/>
</g>
<!-- geometry dash -->
<g transform="translate(1234.4,1164.3)">
<use href="#sq" fill="#0d6f8a"/>
<path d="M-23.5,6 L-12,-3 L-7,23 Z" fill="#16405a"/>
<path d="M-17,20 L-12,8 L-7,20 Z" fill="#0b1c2a" stroke="#5fd0f0" stroke-width="1"/>
<path d="M14,23 L23.5,5 V18 Z" fill="#6fc21c"/>
<path d="M0,-21 L19,-2 L0,17 L-19,-2 Z" fill="#f3a31a"/>
<path d="M0,-17 L15,-2 L0,13 L-15,-2 Z" fill="#ffd21a"/>
<rect x="-7" y="-8" width="5" height="5" fill="#5ee2f0" stroke="#1a4e70" stroke-width="1" transform="rotate(-45 -4.5 -5.5)"/>
<rect x="2" y="-15" width="5" height="5" fill="#5ee2f0" stroke="#1a4e70" stroke-width="1" transform="rotate(-45 4.5 -12.5)"/>
<path d="M-3,8 L12,-7" stroke="#1a4e70" stroke-width="4.5"/>
<path d="M-3,8 L12,-7" stroke="#5ee2f0" stroke-width="2.5"/>
</g>
</svg>

</body></html>
